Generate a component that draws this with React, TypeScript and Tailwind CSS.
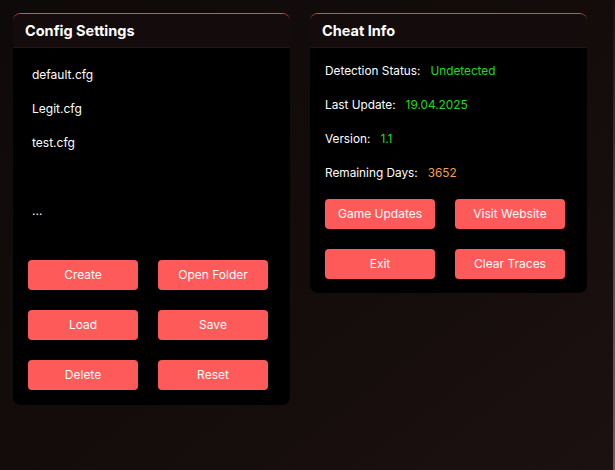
import React from 'react';

const configs = ['default.cfg', 'Legit.cfg', 'test.cfg', '', '...'];

const info = [
  { label: 'Detection Status:', value: 'Undetected', color: 'text-[#1fdc1f]' },
  { label: 'Last Update:', value: '19.04.2025', color: 'text-[#1fdc1f]' },
  { label: 'Version:', value: '1.1', color: 'text-[#1fdc1f]' },
  { label: 'Remaining Days:', value: '3652', color: 'text-[#f0a050]' },
];

const Btn: React.FC<{ label: string }> = ({ label }) => (
  <button className="h-[30px] w-[110px] rounded-[4px] bg-[#ff5a5a] text-[12px] text-white">
    {label}
  </button>
);

const Panel: React.FC<{ title: string; children: React.ReactNode }> = ({ title, children }) => (
  <div className="w-[277px] rounded-[8px] bg-black border-t border-[#e04a4a] overflow-hidden">
    <div className="h-[34px] flex items-center pt-[1px] px-[12px] bg-[#140c0c] border-b border-[#2a1212]">
      <h2 className="text-[14.5px] font-bold text-white">{title}</h2>
    </div>
    {children}
  </div>
);

export default function App() {
  return (
    <div
      className="relative w-[615px] h-[470px] overflow-hidden bg-gradient-to-br from-[#0f0a0a] via-[#130c0b] to-[#1b1110] flex items-start gap-[20px] pl-[13px] pt-[13px]"
      style={{ fontFamily: 'Inter, "Noto Sans", sans-serif' }}
    >
      <Panel title="Config Settings">
        <div className="px-[15px] pt-[10px] pb-[15px]">
          <div className="flex flex-col">
            {configs.map((c, i) => (
              <div key={i} className="h-[34px] flex items-center pl-[4px] text-[12px] text-white">
                {c}
              </div>
            ))}
          </div>
          <div className="mt-[32px] grid grid-cols-[110px_110px] gap-x-[20px] gap-y-[20px]">
            <Btn label="Create" />
            <Btn label="Open Folder" />
            <Btn label="Load" />
            <Btn label="Save" />
            <Btn label="Delete" />
            <Btn label="Reset" />
          </div>
        </div>
      </Panel>

      <Panel title="Cheat Info">
        <div className="px-[15px] pt-[7px] pb-[14px]">
          <div className="flex flex-col">
            {info.map((r) => (
              <div key={r.label} className="h-[34px] flex items-center gap-[10px] text-[11.8px]">
                <span className="text-white">{r.label}</span>
                <span className={r.color}>{r.value}</span>
              </div>
            ))}
          </div>
          <div className="mt-[8px] grid grid-cols-[110px_110px] gap-x-[20px] gap-y-[20px]">
            <Btn label="Game Updates" />
            <Btn label="Visit Website" />
            <Btn label="Exit" />
            <Btn label="Clear Traces" />
          </div>
        </div>
      </Panel>

      <div className="absolute right-0 top-0 h-full w-[2px] bg-gradient-to-b from-[#1a1414] via-[#6a6262] to-[#8a8282] opacity-70" />
    </div>
  );
}
